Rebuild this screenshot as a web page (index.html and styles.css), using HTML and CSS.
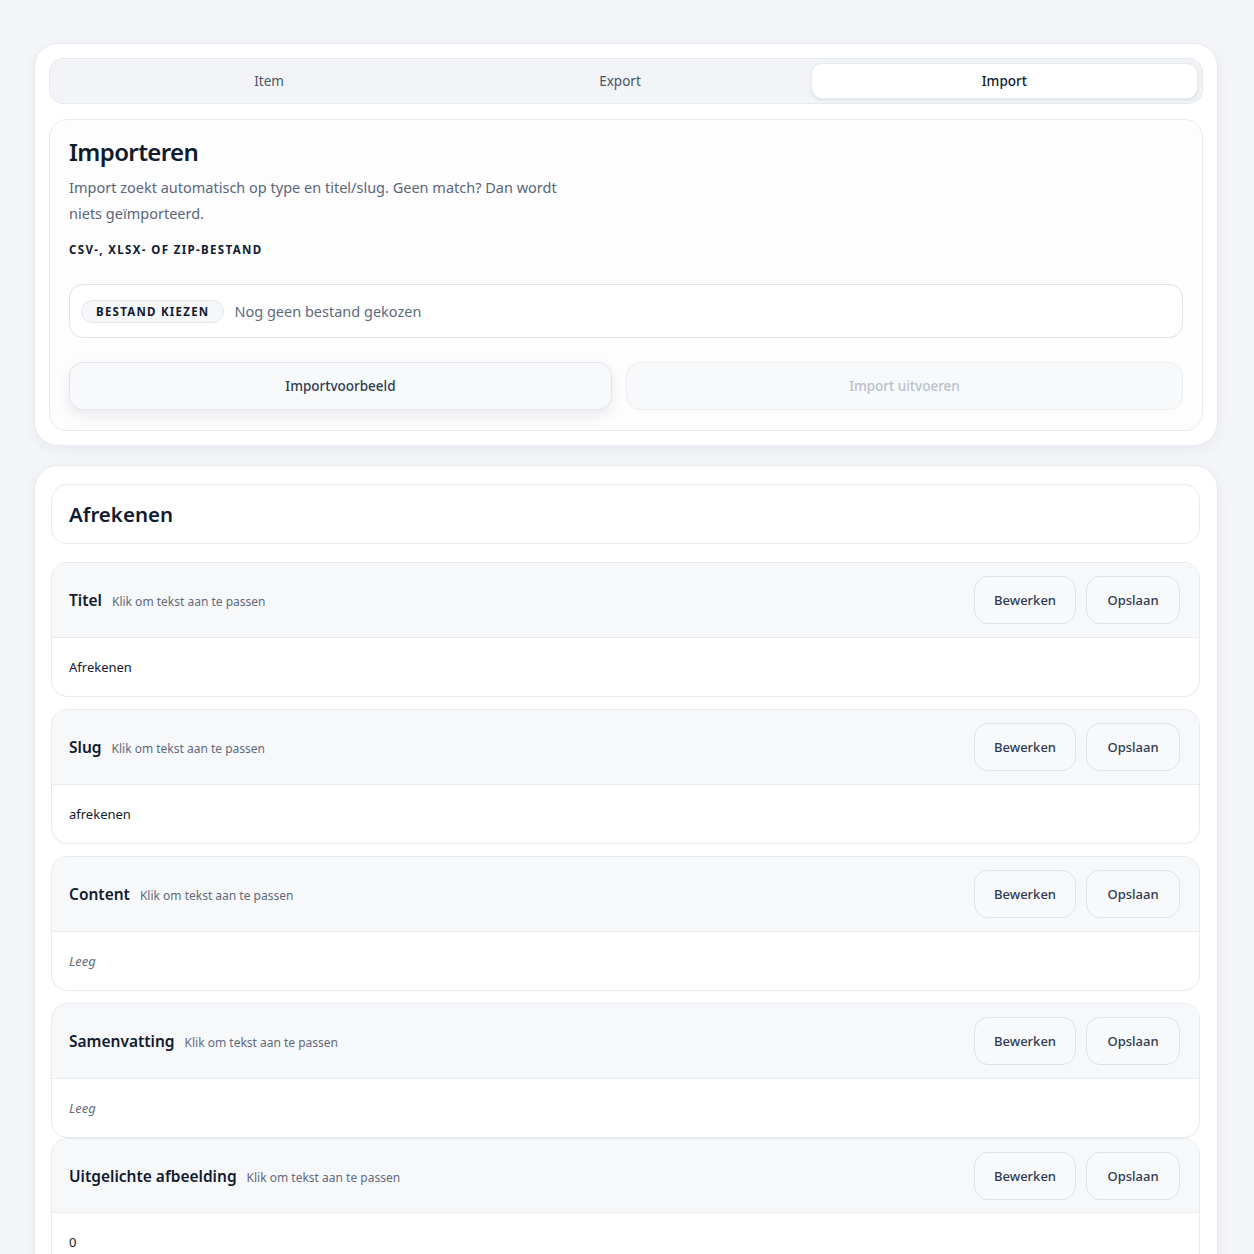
FILE: index.html
```html
<!DOCTYPE html>
<html lang="nl">
<head>
<meta charset="utf-8">
<link rel="stylesheet" href="styles.css">
</head>
<body>
<div class="page">
  <section class="card">
    <nav class="tabs">
      <div class="tab">Item</div>
      <div class="tab">Export</div>
      <div class="tab active">Import</div>
    </nav>
    <div class="panel">
      <h2 class="panel-title">Importeren</h2>
      <p class="panel-desc">Import zoekt automatisch op type en titel/slug. Geen match? Dan wordt niets geïmporteerd.</p>
      <div class="label">CSV-, XLSX- of ZIP-bestand</div>
      <div class="file-input">
        <span class="file-btn">Bestand kiezen</span>
        <span class="file-name">Nog geen bestand gekozen</span>
      </div>
      <div class="actions">
        <button class="btn-big">Importvoorbeeld</button>
        <button class="btn-big disabled">Import uitvoeren</button>
      </div>
    </div>
  </section>

  <section class="card card-2">
    <div class="doc-head"><h2>Afrekenen</h2></div>
    <div class="fields">
      <div class="field">
        <div class="field-head">
          <div class="field-label"><span class="fname">Titel</span><span class="hint">Klik om tekst aan te passen</span></div>
          <div class="field-btns"><button class="btn">Bewerken</button><button class="btn">Opslaan</button></div>
        </div>
        <div class="field-body">Afrekenen</div>
      </div>
      <div class="field">
        <div class="field-head">
          <div class="field-label"><span class="fname">Slug</span><span class="hint">Klik om tekst aan te passen</span></div>
          <div class="field-btns"><button class="btn">Bewerken</button><button class="btn">Opslaan</button></div>
        </div>
        <div class="field-body">afrekenen</div>
      </div>
      <div class="field">
        <div class="field-head">
          <div class="field-label"><span class="fname">Content</span><span class="hint">Klik om tekst aan te passen</span></div>
          <div class="field-btns"><button class="btn">Bewerken</button><button class="btn">Opslaan</button></div>
        </div>
        <div class="field-body empty">Leeg</div>
      </div>
      <div class="field">
        <div class="field-head">
          <div class="field-label"><span class="fname">Samenvatting</span><span class="hint">Klik om tekst aan te passen</span></div>
          <div class="field-btns"><button class="btn">Bewerken</button><button class="btn">Opslaan</button></div>
        </div>
        <div class="field-body empty">Leeg</div>
      </div>
      <div class="field tight">
        <div class="field-head short">
          <div class="field-label"><span class="fname">Uitgelichte afbeelding</span><span class="hint">Klik om tekst aan te passen</span></div>
          <div class="field-btns"><button class="btn">Bewerken</button><button class="btn">Opslaan</button></div>
        </div>
        <div class="field-body">0</div>
      </div>
    </div>
  </section>
</div>
</body>
</html>
```

FILE: styles.css
```css
* { box-sizing: border-box; }
html, body { margin: 0; padding: 0; }
body {
  background: #f4f5f8;
  font-family: "Noto Sans", "Open Sans", "Liberation Sans", sans-serif;
  color: #111a2e;
}
.page {
  padding: 43px 36px 0 34px;
  display: flex;
  flex-direction: column;
  gap: 19px;
}
.card {
  background: #ffffff;
  border: 1px solid #e6e9ef;
  border-radius: 24px;
  padding: 14px 14px 14px 14px;
  box-shadow: 0 4px 14px rgba(20, 30, 60, 0.05);
}
.tabs {
  display: grid;
  grid-template-columns: 431fr 272fr 443fr;
  background: #f2f4f7;
  border: 1px solid #e6e9ef;
  border-radius: 14px;
  padding: 4px;
  height: 46px;
}
.tab {
  display: flex;
  align-items: center;
  justify-content: center;
  font-size: 13.5px;
  color: #4a5568;
  border-radius: 11px;
}
.tab.active {
  margin-left: 55px;
  background: #ffffff;
  color: #111a2e;
  font-weight: 500;
  box-shadow: 0 1px 3px rgba(20, 30, 60, 0.10);
  border: 1px solid #e9ecf1;
}
.panel {
  margin-top: 15px;
  border: 1px solid #e8ebf0;
  border-radius: 18px;
  padding: 17px 19px 20px 19px;
  background: #fdfdfe;
}
.panel-title {
  margin: 0;
  font-size: 24px;
  font-weight: 600;
  letter-spacing: -0.025em;
  line-height: 30px;
  color: #111a2e;
}
.panel-desc {
  margin: 7px 0 0 0;
  max-width: 520px;
  font-size: 14.5px;
  line-height: 26px;
  color: #5b6679;
}
.label {
  margin-top: 16px;
  font-size: 11.5px;
  font-weight: 700;
  letter-spacing: 1.35px;
  text-transform: uppercase;
  color: #111a2e;
}
.file-input {
  margin-top: 27px;
  height: 54px;
  border: 1px solid #dfe3ea;
  border-radius: 14px;
  display: flex;
  align-items: center;
  padding: 0 11px;
  gap: 10px;
  background: #ffffff;
}
.file-btn {
  display: inline-flex;
  align-items: center;
  height: 23px;
  padding: 0 14px;
  border: 1px solid #e2e6ec;
  border-radius: 12px;
  background: #f6f7f9;
  font-size: 11.5px;
  font-weight: 700;
  letter-spacing: 1.25px;
  text-transform: uppercase;
  color: #111a2e;
}
.file-name {
  font-size: 14.5px;
  color: #5f6a7d;
}
.actions {
  margin-top: 24px;
  display: grid;
  grid-template-columns: 543fr 557fr;
  gap: 14px;
}
.btn-big {
  height: 48px;
  border: 1px solid #e1e5eb;
  border-radius: 14px;
  background: #f8f9fb;
  font-family: inherit;
  font-size: 13.5px;
  font-weight: 500;
  color: #2f3b50;
  box-shadow: 0 6px 14px rgba(20, 30, 60, 0.08);
}
.btn-big.disabled {
  color: #b9c0cb;
  background: #f8f9fb;
  border-color: #eceef2;
  box-shadow: none;
}
.card-2 {
  padding: 18px 17px 0 16px;
  border-bottom-left-radius: 0;
  border-bottom-right-radius: 0;
}
.doc-head {
  height: 60px;
  border: 1px solid #e8ebf0;
  border-radius: 16px;
  display: flex;
  align-items: center;
  padding: 0 17px;
}
.doc-head h2 {
  margin: 0;
  font-size: 20.5px;
  font-weight: 600;
  color: #111a2e;
}
.fields {
  margin-top: 18px;
  display: flex;
  flex-direction: column;
  gap: 12px;
}
.field {
  border: 1px solid #e6e9ef;
  border-radius: 16px;
  overflow: hidden;
  background: #ffffff;
}
.field.tight { margin-top: -12px; border-bottom-left-radius: 0; border-bottom-right-radius: 0; }
.field-head {
  height: 75px;
  background: #f7f8fa;
  border-bottom: 1px solid #e8ebf0;
  display: flex;
  align-items: center;
  justify-content: space-between;
  padding: 0 19px 0 17px;
}
.field-head.short { height: 74px; }
.field-label {
  display: flex;
  align-items: baseline;
  gap: 10px;
}
.fname {
  font-size: 15.5px;
  font-weight: 600;
  color: #111a2e;
}
.hint {
  font-size: 12px;
  color: #5f6a7d;
}
.field-btns {
  display: flex;
  gap: 10px;
}
.btn {
  height: 48px;
  min-width: 94px;
  padding: 0 19px;
  border: 1px solid #dfe3ea;
  border-radius: 14px;
  background: #f8f9fb;
  font-family: inherit;
  font-size: 13px;
  font-weight: 500;
  color: #2f3b50;
}
.field-body {
  height: 58px;
  display: flex;
  align-items: center;
  padding: 0 17px;
  font-size: 13px;
  color: #111a2e;
}
.field-body.empty {
  font-style: italic;
  color: #5f6a7d;
}
```
